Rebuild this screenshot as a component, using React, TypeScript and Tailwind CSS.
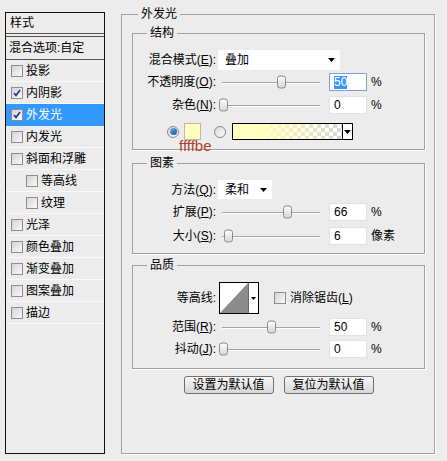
import React from "react";

const FONT = { fontFamily: '"Liberation Sans", "Noto Sans CJK SC", sans-serif' };

function Check({ checked = false }: { checked?: boolean }) {
  return (
    <span className="flex w-[12px] h-[12px] shrink-0 items-center justify-center border border-[#8e8e8e] bg-gradient-to-br from-[#d4d4d4] to-[#f9f9f9]">
      {checked && (
        <svg width="8" height="8" viewBox="0 0 8 8">
          <path d="M1 4 L3 6.5 L7 1" fill="none" stroke="#23307a" strokeWidth="1.6" />
        </svg>
      )}
    </span>
  );
}

function Radio({ on = false }: { on?: boolean }) {
  return (
    <span className="flex w-[12px] h-[12px] shrink-0 items-center justify-center rounded-full border border-[#8a8a8a] bg-gradient-to-br from-[#d8d8d8] to-[#fbfbfb]">
      {on && <span className="w-[7px] h-[7px] rounded-full bg-gradient-to-br from-[#6fb4f0] to-[#0f4f9c]" />}
    </span>
  );
}

function Arrow() {
  return (
    <svg width="7" height="4" viewBox="0 0 7 4">
      <path d="M0 0 H7 L3.5 4 Z" fill="#000" />
    </svg>
  );
}

// slider: track 222-320, thumb centre given in page x
function Slider({ at }: { at: number }) {
  return (
    <div className="relative ml-[2px] w-[106px] h-full flex items-center px-[4px]">
      <div className="w-full h-[1px] bg-[#a3a3a3] shadow-[0_1px_0_#ffffff]" />
      <div
        className="absolute top-1/2 -translate-y-1/2 w-[9px] h-[13px] rounded-[3px] border border-[#8a8a8a] bg-gradient-to-b from-[#fdfdfd] to-[#d6d6d6]"
        style={{ left: at - 218 - 4.5 }}
      />
    </div>
  );
}

function NumBox({ value, focus = false, unit = "%" }: { value: string; focus?: boolean; unit?: string }) {
  return (
    <>
      <div
        className={
          "ml-[5px] w-[38px] h-[18px] flex items-center bg-white pl-[4px] text-[12px] border " +
          (focus ? "border-[#7ea4d6]" : "border-[#e2e2e2]")
        }
      >
        {focus ? <span className="bg-[#3399ff] text-white leading-[13px]">{value}</span> : value}
      </div>
      <span className="ml-[4px] text-[12px]">{unit}</span>
    </>
  );
}

function Label({ text, k }: { text: string; k?: string }) {
  return (
    <span className="w-[83px] shrink-0 text-right text-[12px] leading-[14px] whitespace-nowrap">
      {text}
      {k && (
        <>
          (<span className="underline underline-offset-1">{k}</span>)
        </>
      )}
      :
    </span>
  );
}

function Group({ title, className, children }: { title: string; className: string; children: React.ReactNode }) {
  return (
    <fieldset className={"border border-[#a0a0a0] shadow-[1px_1px_0_#ffffff] " + className}>
      <legend className="ml-[14px] px-[3px] text-[12px] leading-[12px]">{title}</legend>
      <div className="flex flex-col">{children}</div>
    </fieldset>
  );
}

const styles: { name: string; checked?: boolean; active?: boolean; sub?: boolean }[] = [
  { name: "投影" },
  { name: "内阴影", checked: true },
  { name: "外发光", checked: true, active: true },
  { name: "内发光" },
  { name: "斜面和浮雕" },
  { name: "等高线", sub: true },
  { name: "纹理", sub: true },
  { name: "光泽" },
  { name: "颜色叠加" },
  { name: "渐变叠加" },
  { name: "图案叠加" },
  { name: "描边" },
];

export default function App() {
  return (
    <div className="flex w-[447px] h-[461px] bg-[#ececec] text-black overflow-hidden" style={FONT}>
      {/* Style list */}
      <div className="ml-[5px] mt-[12px] w-[100px] h-[442px] border border-[#111] flex flex-col">
        <div className="h-[21px] shrink-0 border-b border-[#555] pl-[4px] flex items-center text-[12px]">样式</div>
        <div className="h-[3px] shrink-0 border-b border-[#555]" />
        <div className="h-[23px] shrink-0 border-b border-[#555] pl-[3px] flex items-center text-[12px]">
          混合选项:自定
        </div>
        {styles.map((s) => (
          <div
            key={s.name}
            className={
              "h-[22px] shrink-0 border-b flex items-center gap-[3px] text-[12px] " +
              (s.active ? "bg-[#3399ff] text-white border-[#3399ff]" : "border-[#fafafa]") +
              (s.sub ? " pl-[20px]" : " pl-[5px]")
            }
          >
            <Check checked={s.checked} />
            <span>{s.name}</span>
          </div>
        ))}
      </div>

      {/* Outer glow settings */}
      <fieldset className="ml-[16px] mt-[8px] w-[314px] h-[446px] border border-[#a0a0a0] shadow-[1px_1px_0_#ffffff]">
        <legend className="ml-[16px] px-[3px] text-[12px] leading-[12px]">外发光</legend>
        <div className="pl-[10px] pr-[9px] pt-[7px] flex flex-col">
          <Group title="结构" className="h-[123px]">
            <div className="mt-[11px] h-[20px] flex items-center">
              <Label text="混合模式" k="E" />
              <div className="ml-[2px] w-[122px] h-[20px] bg-white flex items-center justify-between pl-[7px] pr-[5px] text-[12px]">
                <span>叠加</span>
                <Arrow />
              </div>
            </div>
            <div className="mt-[3px] h-[18px] flex items-center">
              <Label text="不透明度" k="O" />
              <Slider at={281} />
              <NumBox value="50" focus />
            </div>
            <div className="mt-[5px] h-[18px] flex items-center">
              <Label text="杂色" k="N" />
              <Slider at={223} />
              <NumBox value="0" />
            </div>
            <div className="relative mt-[9px] h-[17px] flex items-center pl-[34px]">
              <Radio on />
              <div className="ml-[5px] w-[17px] h-[17px] bg-[#ffffbe] border border-[#b8b8b8]" />
              <span className="ml-[13px]">
                <Radio />
              </span>
              <div className="ml-[6px] w-[121px] h-[17px] border border-black flex">
                <div className="flex-1 bg-[image:repeating-conic-gradient(#d6d6d6_0%_25%,#ffffff_0%_50%)] bg-[length:8px_8px]">
                  <div className="w-full h-full bg-gradient-to-r from-[#ffffbe] from-25% to-transparent" />
                </div>
                <div className="w-[10px] border-l border-black bg-white flex items-center justify-center">
                  <Arrow />
                </div>
              </div>
              <span className="absolute left-[46px] top-[14px] text-[15px] leading-[17px] text-[#b0402a]">ffffbe</span>
            </div>
          </Group>

          <Group title="图素" className="mt-[7px] h-[97px]">
            <div className="mt-[11px] h-[19px] flex items-center">
              <Label text="方法" k="Q" />
              <div className="ml-[2px] w-[54px] h-[19px] bg-white flex items-center justify-between pl-[7px] pr-[5px] text-[12px]">
                <span>柔和</span>
                <Arrow />
              </div>
            </div>
            <div className="mt-[4px] h-[18px] flex items-center">
              <Label text="扩展" k="P" />
              <Slider at={287} />
              <NumBox value="66" />
            </div>
            <div className="mt-[6px] h-[18px] flex items-center">
              <Label text="大小" k="S" />
              <Slider at={228} />
              <NumBox value="6" unit="像素" />
            </div>
          </Group>

          <Group title="品质" className="mt-[5px] h-[110px]">
            <div className="mt-[11px] h-[32px] flex items-center">
              <Label text="等高线" />
              <div className="ml-[3px] w-[40px] h-[32px] border border-black flex bg-white">
                <svg width="28" height="30" viewBox="0 0 28 30" className="block">
                  <path d="M0 30 L28 0 L28 30 Z" fill="#8c8c8c" />
                </svg>
                <div className="flex-1 border-l border-[#6a6a6a] flex items-center justify-center">
                  <svg width="5" height="3" viewBox="0 0 5 3">
                    <path d="M0 0 H5 L2.5 3 Z" fill="#000" />
                  </svg>
                </div>
              </div>
              <span className="ml-[15px]">
                <Check />
              </span>
              <span className="ml-[4px] text-[12px] whitespace-nowrap">
                消除锯齿(<span className="underline underline-offset-1">L</span>)
              </span>
            </div>
            <div className="mt-[4px] h-[18px] flex items-center">
              <Label text="范围" k="R" />
              <Slider at={271} />
              <NumBox value="50" />
            </div>
            <div className="mt-[4px] h-[18px] flex items-center">
              <Label text="抖动" k="J" />
              <Slider at={223} />
              <NumBox value="0" />
            </div>
          </Group>

          <div className="mt-[7px] flex justify-center gap-[10px]">
            <button className="w-[90px] h-[18px] rounded-[3px] border border-[#707070] bg-gradient-to-b from-[#f6f6f6] to-[#d8d8d8] text-[12px] leading-[14px]">
              设置为默认值
            </button>
            <button className="w-[90px] h-[18px] rounded-[3px] border border-[#707070] bg-gradient-to-b from-[#f6f6f6] to-[#d8d8d8] text-[12px] leading-[14px]">
              复位为默认值
            </button>
          </div>
        </div>
      </fieldset>
    </div>
  );
}
